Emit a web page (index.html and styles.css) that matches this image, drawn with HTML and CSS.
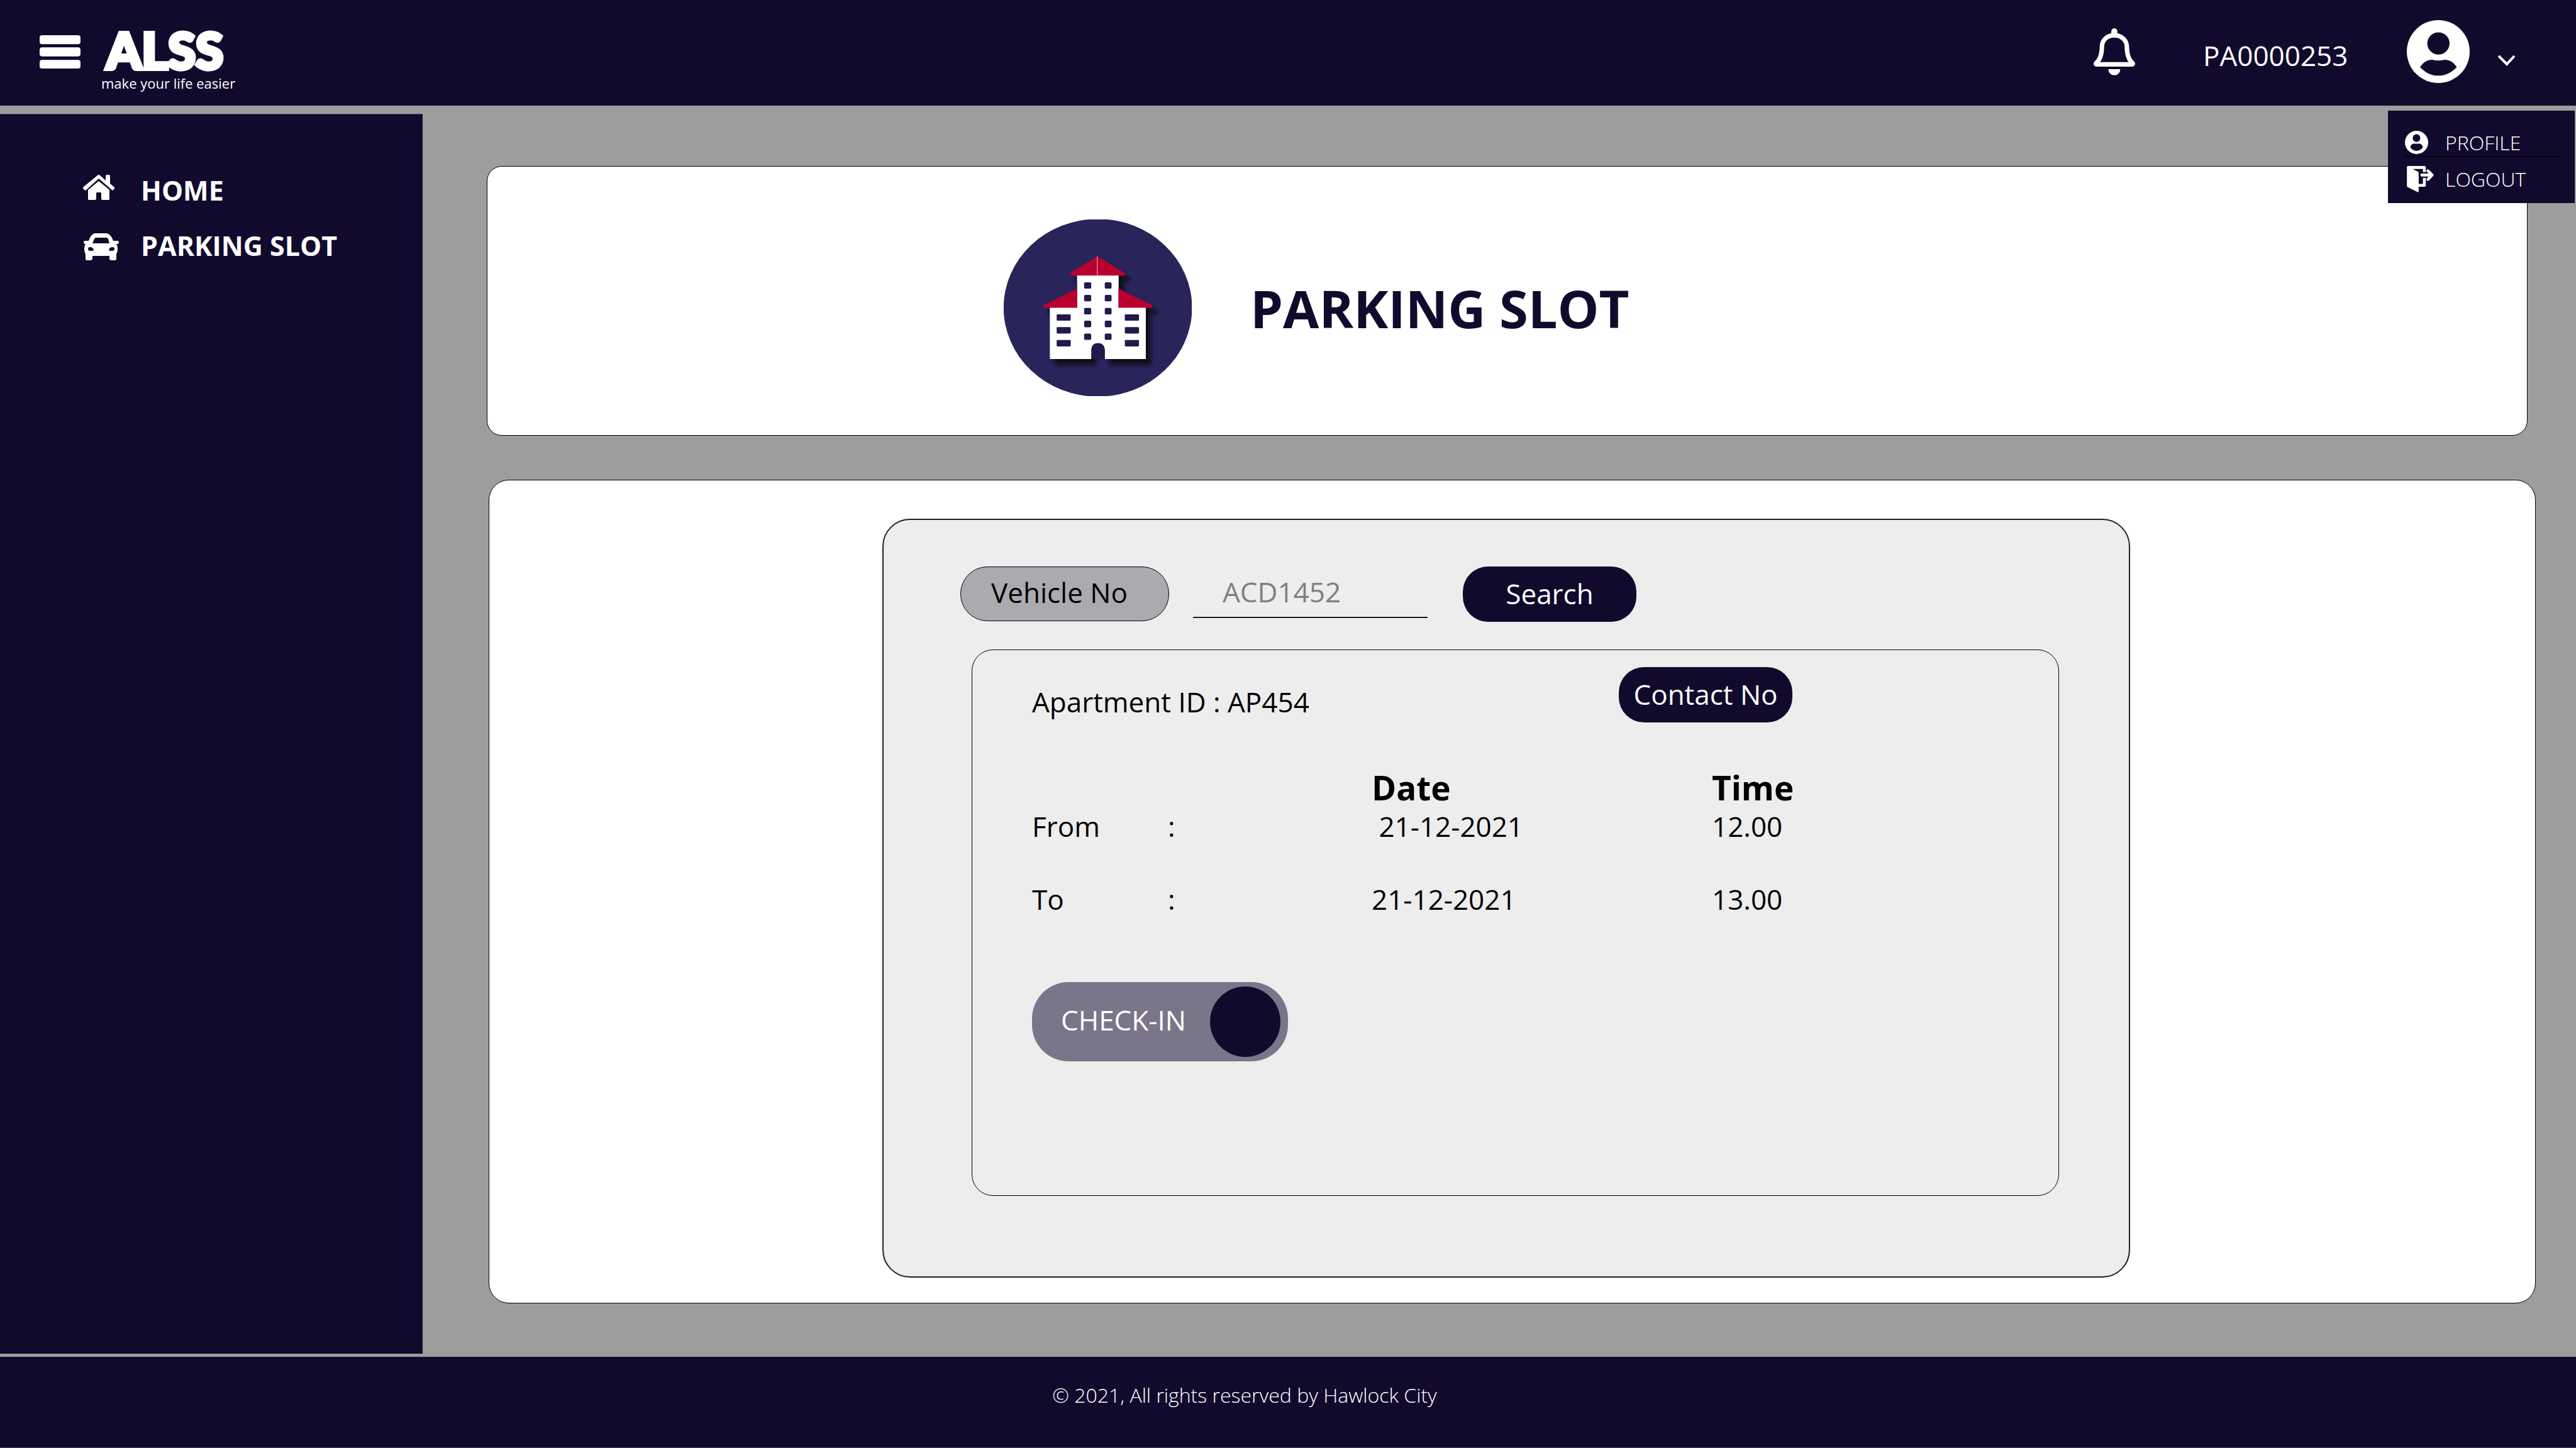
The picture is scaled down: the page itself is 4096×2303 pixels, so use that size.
FILE: index.html
```html
<!DOCTYPE html>
<html lang="en">
<head>
<meta charset="utf-8">
<meta name="viewport" content="width=device-width, initial-scale=1">
<title>ALSS - Parking Slot</title>
<link rel="stylesheet" href="styles.css">
</head>
<body>
<header class="topbar">
  <button class="icon-button" type="button" aria-label="Toggle menu">
    <svg class="burger" viewBox="84 168 272 222" aria-hidden="true">
      <rect x="84" y="168" width="272" height="60" rx="16"/>
      <rect x="84" y="249" width="272" height="60" rx="16"/>
      <rect x="84" y="332" width="272" height="58" rx="16"/>
    </svg>
  </button>
  <a class="brand" href="#">
    <span class="brand-name">ALSS</span>
    <span class="brand-tagline">make your life easier</span>
  </a>
  <button class="icon-button notifications" type="button" aria-label="Notifications">
    <svg class="bell" viewBox="80 132 277 315" aria-hidden="true">
      <rect x="198" y="132" width="40" height="50" rx="20"/>
      <path class="bell-body" d="M135 260C135 205 175 179 218 179S302 205 302 260C303 310 315 345 341 366Q343 373 336 373H100Q93 373 95 366C121 345 134 310 135 260Z"/>
      <path d="M178 405H258A40 41 0 0 1 178 405Z"/>
    </svg>
  </button>
  <span class="user-id">PA0000253</span>
  <svg class="avatar" viewBox="205 75 418 418" aria-hidden="true">
    <circle cx="414" cy="284" r="209"/>
    <circle class="cut" cx="415" cy="230" r="74"/>
    <path class="cut" d="M293 387C318 348 350 337 378 338C396 346 434 346 452 338C485 337 512 350 537 387C505 421 465 444 414 444S325 421 293 387Z"/>
  </svg>
  <button class="icon-button account-toggle" type="button" aria-label="Account menu" aria-expanded="true">
    <svg class="chevron" viewBox="0 0 27 18" aria-hidden="true"><path d="M1 2L14 15L26 2"/></svg>
  </button>
  <nav class="account-menu" aria-label="Account">
    <a class="account-item" href="#">
      <span class="account-icon">
        <svg class="profile-icon" viewBox="192 807 153 153" aria-hidden="true">
          <circle cx="268.500" cy="883.500" r="76.500"/>
          <circle class="cut" cx="268" cy="855" r="25"/>
          <path class="cut" d="M228 918C228 900 240 892 255 892H283C300 892 309 903 309 918C298 932 285 939 268 939S238 932 228 918Z"/>
        </svg>
      </span>
      PROFILE
    </a>
    <a class="account-item account-item-last" href="#">
      <span class="account-icon logout-cell">
        <svg class="logout-icon" viewBox="204 1041 178 175" aria-hidden="true">
          <path d="M212 1041H320Q329 1041 329 1050V1082H310V1061H242L275 1077Q282 1080 282 1088V1160H310V1120H329V1170Q329 1179 320 1179H282V1210Q282 1217 275 1214L208 1181Q204 1178 204 1173V1049Q204 1041 212 1041Z"/>
          <path class="logout-arrow" d="M303 1101H368M343 1073L371 1101L343 1130"/>
        </svg>
      </span>
      LOGOUT
    </a>
  </nav>
</header>

<div class="layout">
  <nav class="sidebar" aria-label="Main">
    <a class="nav-link" href="#">
      <svg class="nav-icon" viewBox="0 0 58 60" aria-hidden="true">
        <path d="M26 5Q27 5 28 6L37 14V7Q37 5 39 5H42Q44 5 44 7V19L51 25Q52 27 50 28L48 30L26 11L5 30L2 28Q0 26 2 24L24 6Q25 5 26 5Z"/>
        <path d="M26 15L43 29V44Q43 45 42 45H32Q30 45 30 43V35Q30 33 29 33H23Q22 33 22 35V43Q22 45 20 45H10Q9 45 9 44V29Z"/>
      </svg>
      HOME
    </a>
    <a class="nav-link" href="#">
      <svg class="nav-icon" viewBox="0 0 58 60" aria-hidden="true">
        <path fill-rule="evenodd" d="M20 10H38C44 11 47 16 49 22H56Q58 22 58 24L57 27H54Q56 30 56 34Q56 40 54 43V50Q54 53 52 53H46Q43 53 43 50V46H16V50Q16 53 13 53H7Q5 53 5 50V43Q3 40 3 34Q3 30 5 27H3L2 24Q2 22 4 22H10C12 16 15 11 20 10ZM22 17Q20 17 19 19L16 26H43L41 19Q40 17 38 17ZM9 35Q9 38 13 38Q18 38 18 37Q17 32 12 32Q9 32 9 35ZM51 35Q51 32 48 32Q43 32 42 37Q42 38 47 38Q51 38 51 35Z"/>
      </svg>
      PARKING SLOT
    </a>
  </nav>

  <main class="content">
    <section class="card title-card">
      <svg class="building" viewBox="54 44 1245 1172" aria-hidden="true">
        <defs>
          <filter id="building-shadow" x="-20%" y="-20%" width="150%" height="150%">
            <feDropShadow dx="32" dy="38" stdDeviation="14" flood-color="#0a0915"/>
          </filter>
        </defs>
        <ellipse cx="677" cy="630" rx="625" ry="589" fill="#29245a"/>
        <g filter="url(#building-shadow)">
          <path fill="#ffffff" d="M540 412H814V628H995V970H723V905Q718 865 678 865T634 905V970H359V628H540Z"/>
          <path fill="#ba002e" d="M675 288L856 400Q860 416 850 416H500Q490 416 494 400Z"/>
          <path fill="#ba002e" d="M540 504V630H322Q314 628 316 612ZM814 504L1036 612Q1040 628 1030 630H814Z"/>
        </g>
        <path stroke="#dc8096" stroke-width="6" d="M673 290V414"/>
        <g fill="#221a4a">
          <path d="M634 970V905Q638 865 678 865T723 905V970Z"/>
          <rect x="586" y="461" width="47" height="42" rx="8"/><rect x="723" y="461" width="45" height="42" rx="8"/>
          <rect x="586" y="545" width="47" height="42" rx="8"/><rect x="723" y="545" width="45" height="42" rx="8"/>
          <rect x="586" y="631" width="47" height="43" rx="8"/><rect x="723" y="631" width="45" height="43" rx="8"/>
          <rect x="586" y="716" width="47" height="43" rx="8"/><rect x="723" y="716" width="45" height="43" rx="8"/>
          <rect x="586" y="801" width="47" height="42" rx="8"/><rect x="723" y="801" width="45" height="42" rx="8"/>
          <rect x="404" y="674" width="93" height="42" rx="6"/><rect x="856" y="674" width="94" height="42" rx="6"/>
          <rect x="404" y="758" width="93" height="43" rx="6"/><rect x="856" y="758" width="94" height="43" rx="6"/>
          <rect x="404" y="844" width="93" height="42" rx="6"/><rect x="856" y="844" width="94" height="42" rx="6"/>
        </g>
      </svg>
      <h1 class="page-title">PARKING SLOT</h1>
    </section>

    <section class="card detail-card">
      <div class="panel">
        <form class="search-row">
          <label class="vehicle-label" for="vehicle">Vehicle No</label>
          <input class="vehicle-input" id="vehicle" type="text" placeholder="ACD1452">
          <button class="pill-button" type="button">Search</button>
        </form>
        <div class="booking">
          <div class="booking-head">
            <span class="apartment">Apartment ID : AP454</span>
            <button class="pill-button" type="button">Contact No</button>
          </div>
          <table class="schedule">
            <thead>
              <tr><td class="col-label"></td><td class="col-colon"></td><th class="col-date" scope="col">Date</th><th scope="col">Time</th></tr>
            </thead>
            <tbody>
              <tr class="row-from"><td>From</td><td>:</td><td>&nbsp;21-12-2021</td><td>12.00</td></tr>
              <tr><td>To</td><td>:</td><td>21-12-2021</td><td>13.00</td></tr>
            </tbody>
          </table>
          <label class="checkin">
            <span class="checkin-text">CHECK-IN</span>
            <input class="checkin-knob" type="checkbox" checked>
          </label>
        </div>
      </div>
    </section>
  </main>
</div>

<footer class="footer">© 2021, All rights reserved by Hawlock City</footer>
</body>
</html>
```
FILE: styles.css
```css
:root {
  --navy: #110a2d;
  --grey: #9e9c9c;
  --panel: #ededed;
  --line: #231f20;
}

* {
  box-sizing: border-box;
}

body {
  margin: 0;
  min-height: 100vh;
  display: flex;
  flex-direction: column;
  background: var(--grey);
  color: #000000;
  font-family: "Open Sans", "Noto Sans", sans-serif;
  font-size: 44px;
  line-height: 60px;
}

button,
input {
  font: inherit;
}

a {
  color: inherit;
  text-decoration: none;
}

svg {
  display: block;
  flex: none;
  fill: #ffffff;
}

.cut {
  fill: var(--navy);
}

/* Top bar */

.topbar {
  position: relative;
  display: flex;
  align-items: center;
  height: 168px;
  padding: 0 97px 4px 63px;
  background: var(--navy);
  color: #ffffff;
}

.icon-button {
  padding: 0;
  border: 0;
  background: none;
}

.burger {
  width: 65px;
  height: 53px;
}

.brand {
  display: flex;
  flex-direction: column;
  margin: 20px 0 0 33px;
}

.brand-name {
  padding-left: 8px;
  font-family: Lato, sans-serif;
  font-size: 80px;
  font-weight: 900;
  line-height: 80px;
  -webkit-text-stroke: 6px #ffffff;
}

.brand-tagline {
  font-size: 22px;
  line-height: 26px;
}

.notifications {
  margin-left: auto;
}

.bell {
  width: 66px;
  height: 75px;
}

.bell-body {
  fill: none;
  stroke: #ffffff;
  stroke-width: 30;
  stroke-linejoin: round;
}

.user-id {
  width: 324px;
  margin: 12px 0 0 108px;
}

.avatar {
  width: 100px;
  height: 100px;
}

.account-toggle {
  margin: 28px 0 0 45px;
}

.chevron {
  width: 27px;
  height: 18px;
  fill: none;
  stroke: #ffffff;
  stroke-width: 4;
}

.account-menu {
  position: absolute;
  z-index: 1;
  top: 176px;
  right: 2px;
  width: 297px;
  padding: 29px 23px 17px 26px;
  background: var(--navy);
  font-size: 32px;
  font-weight: 300;
}

.account-item {
  display: flex;
  align-items: center;
  height: 45px;
  border-bottom: 2px solid #05030c;
}

.account-item-last {
  height: 42px;
  margin-top: 14px;
  border-bottom: 0;
}

.account-icon {
  width: 65px;
  padding-left: 1px;
}

.logout-cell {
  padding-left: 4px;
}

.profile-icon {
  width: 37px;
  height: 37px;
}

.logout-icon {
  width: 43px;
  height: 42px;
}

.logout-arrow {
  fill: none;
  stroke: #ffffff;
  stroke-width: 19;
  stroke-linecap: round;
  stroke-linejoin: round;
}

/* Sidebar and content */

.layout {
  flex: 1;
  display: flex;
}

.sidebar {
  flex: none;
  display: flex;
  flex-direction: column;
  gap: 28px;
  width: 672px;
  margin: 13px 0 5px;
  padding: 91px 0 0 131px;
  border-top: 1px solid #4a4656;
  background: var(--navy);
  color: #ffffff;
  font-size: 43px;
  font-weight: 700;
}

.nav-link {
  display: flex;
  align-items: center;
  gap: 35px;
}

.nav-icon {
  width: 58px;
  height: 60px;
}

.content {
  flex: 1;
  display: flex;
  flex-direction: column;
  gap: 70px;
  padding: 96px 64px 85px 102px;
}

.card {
  border: 1px solid #000000;
  background: #ffffff;
}

.title-card {
  display: flex;
  gap: 93px;
  margin-right: 13px;
  padding: 84px 60px 62px 821px;
  border-radius: 24px;
}

.building {
  width: 299px;
  height: 281px;
}

.page-title {
  align-self: center;
  margin: 0;
  color: var(--navy);
  font-size: 83px;
  font-weight: 700;
  line-height: 100px;
}

.detail-card {
  margin-left: 3px;
  padding: 61px 644px 40px 625px;
  border-radius: 32px;
}

.panel {
  padding: 74px 111px 128px 122px;
  border: 2px solid var(--line);
  border-radius: 44px;
  background: var(--panel);
}

.search-row {
  display: flex;
  align-items: flex-start;
}

.vehicle-label {
  width: 332px;
  height: 87px;
  padding: 10px 0 0 48px;
  border: 1px solid #000000;
  border-radius: 43px;
  background: #abaaaf;
}

.vehicle-input {
  width: 373px;
  height: 82px;
  margin: 0 56px 0 38px;
  padding: 0 0 0 47px;
  border: 0;
  border-bottom: 2px solid var(--line);
  background: none;
  outline: 0;
}

.vehicle-input::placeholder {
  color: #808080;
  opacity: 1;
}

.pill-button {
  width: 276px;
  height: 88px;
  padding: 0 0 3px;
  border: 0;
  border-radius: 40px;
  background: var(--navy);
  color: #ffffff;
}

.booking {
  margin: 44px 0 0 18px;
  padding: 27px 95px 213px;
  border: 1px solid #000000;
  border-radius: 34px;
}

.booking-head {
  display: flex;
  align-items: flex-end;
}

.apartment {
  width: 933px;
  padding-bottom: 3px;
}

.schedule {
  margin-top: 73px;
  border-collapse: collapse;
}

.schedule th,
.schedule td {
  padding: 0;
  text-align: left;
  vertical-align: top;
}

.schedule th {
  font-size: 53px;
  line-height: 62px;
}

.col-label {
  width: 216px;
}

.col-colon {
  width: 324px;
}

.col-date {
  width: 541px;
}

.row-from {
  height: 116px;
}

.checkin {
  display: flex;
  align-items: center;
  justify-content: space-between;
  width: 407px;
  height: 126px;
  margin-top: 102px;
  padding: 0 12px 0 46px;
  border-radius: 58px;
  background: #7a7588;
  color: #ffffff;
}

.checkin-text {
  padding-bottom: 6px;
}

.checkin-knob {
  appearance: none;
  width: 112px;
  height: 112px;
  margin: 0;
  border-radius: 50%;
  background: var(--navy);
}

.footer {
  height: 145px;
  padding: 39px 138px 0 0;
  border-bottom: 1px solid #4a4656;
  background: var(--navy);
  color: #ffffff;
  font-size: 32px;
  font-weight: 300;
  line-height: 44px;
  text-align: center;
}
```
